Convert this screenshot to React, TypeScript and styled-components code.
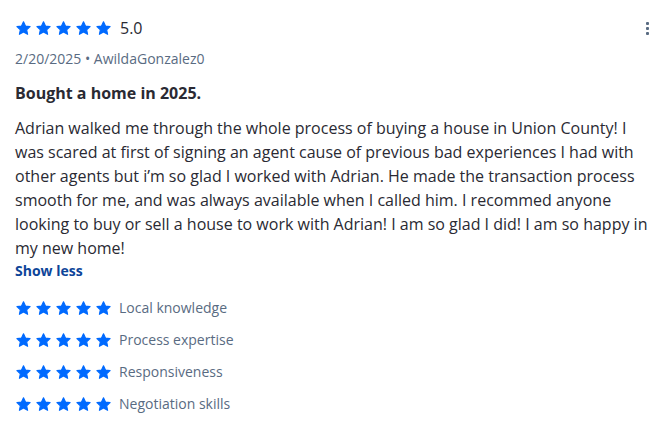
import React from "react";
import styled, { createGlobalStyle } from "styled-components";

const Global = createGlobalStyle`
  html, body { margin: 0; padding: 0; background: #fff; }
  body { font-family: "Open Sans", "Noto Sans", sans-serif; color: #2a2a33; }
`;

const Card = styled.div`
  position: relative;
  padding: 17px 16px 16px 15px;
  box-sizing: border-box;
  width: 669px;
`;

const Header = styled.div`
  display: flex;
  align-items: center;
  height: 22px;
`;

const Stars = styled.div`
  display: flex;
  gap: 3px;
  align-items: center;
`;

const Score = styled.span`
  margin-left: 8px;
  font-size: 16px;
  line-height: 22px;
  color: #2a2a33;
`;

const Menu = styled.button`
  position: absolute;
  top: 20px;
  right: 18px;
  width: 8px;
  height: 16px;
  padding: 0;
  border: 0;
  background: none;
  display: flex;
  flex-direction: column;
  align-items: center;
  justify-content: center;
  gap: 2px;
`;

const Dot = styled.span`
  width: 3px;
  height: 3px;
  border-radius: 1px;
  background: #596b82;
`;

const Meta = styled.div`
  margin-top: 10px;
  font-size: 14px;
  line-height: 20px;
  color: #596b82;
`;

const Title = styled.div`
  margin-top: 12px;
  font-size: 16px;
  font-weight: 700;
  line-height: 24px;
  color: #2a2a33;
`;

const Body = styled.p`
  margin: 11px 0 0;
  font-size: 16px;
  line-height: 24px;
  width: 634px;
  color: #2a2a33;
`;

const ShowLess = styled.button`
  display: block;
  padding: 0;
  border: 0;
  background: none;
  font-family: inherit;
  font-size: 14px;
  font-weight: 700;
  line-height: 20px;
  color: #0d4599;
  margin-top: 1px;
`;

const Ratings = styled.div`
  margin-top: 17px;
  display: flex;
  flex-direction: column;
  gap: 12px;
`;

const RatingRow = styled.div`
  display: flex;
  align-items: center;
  height: 20px;
`;

const Label = styled.span`
  margin-left: 7px;
  font-size: 14px;
  line-height: 20px;
  color: #596b82;
`;

const Star = () => (
  <svg width="17" height="17" viewBox="0 0 24 24">
    <path
      d="M12 2.6l2.8 6 6.5.7-4.9 4.4 1.4 6.5L12 16.9l-5.8 3.3 1.4-6.5-4.9-4.4 6.5-.7z"
      fill="#006aff"
      stroke="#006aff"
      strokeWidth="1.6"
      strokeLinejoin="round"
    />
  </svg>
);

const FiveStars = () => (
  <Stars>
    {[0, 1, 2, 3, 4].map((i) => (
      <Star key={i} />
    ))}
  </Stars>
);

const categories = [
  "Local knowledge",
  "Process expertise",
  "Responsiveness",
  "Negotiation skills",
];

export default function App() {
  return (
    <>
      <Global />
      <Card>
        <Header>
          <FiveStars />
          <Score>5.0</Score>
        </Header>
        <Menu aria-label="More">
          <Dot />
          <Dot />
          <Dot />
        </Menu>
        <Meta>2/20/2025 • AwildaGonzalez0</Meta>
        <Title>Bought a home in 2025.</Title>
        <Body>
          Adrian walked me through the whole process of buying a house in Union
          County! I was scared at first of signing an agent cause of previous bad
          experiences I had with other agents but i’m so glad I worked with
          Adrian. He made the transaction process smooth for me, and was always
          available when I called him. I recommed anyone looking to buy or sell a
          house to work with Adrian! I am so glad I did! I am so happy in my new
          home!
        </Body>
        <ShowLess>Show less</ShowLess>
        <Ratings>
          {categories.map((c) => (
            <RatingRow key={c}>
              <FiveStars />
              <Label>{c}</Label>
            </RatingRow>
          ))}
        </Ratings>
      </Card>
    </>
  );
}
